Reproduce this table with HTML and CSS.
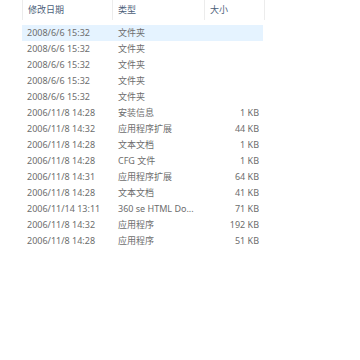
FILE: index.html
```html
<!DOCTYPE html>
<html>
<head>
<meta charset="utf-8">
<link rel="stylesheet" href="styles.css">
</head>
<body>
<div class="list">
  <div class="header">
    <div class="hcell">修改日期</div>
    <div class="hcell">类型</div>
    <div class="hcell">大小</div>
  </div>
  <div class="rows">
    <div class="row selected"><span class="date">2008/6/6 15:32</span><span class="type">文件夹</span><span class="size"></span></div>
    <div class="row"><span class="date">2008/6/6 15:32</span><span class="type">文件夹</span><span class="size"></span></div>
    <div class="row"><span class="date">2008/6/6 15:32</span><span class="type">文件夹</span><span class="size"></span></div>
    <div class="row"><span class="date">2008/6/6 15:32</span><span class="type">文件夹</span><span class="size"></span></div>
    <div class="row"><span class="date">2008/6/6 15:32</span><span class="type">文件夹</span><span class="size"></span></div>
    <div class="row"><span class="date">2006/11/8 14:28</span><span class="type">安装信息</span><span class="size">1 KB</span></div>
    <div class="row"><span class="date">2006/11/8 14:32</span><span class="type">应用程序扩展</span><span class="size">44 KB</span></div>
    <div class="row"><span class="date">2006/11/8 14:28</span><span class="type">文本文档</span><span class="size">1 KB</span></div>
    <div class="row"><span class="date">2006/11/8 14:28</span><span class="type">CFG 文件</span><span class="size">1 KB</span></div>
    <div class="row"><span class="date">2006/11/8 14:31</span><span class="type">应用程序扩展</span><span class="size">64 KB</span></div>
    <div class="row"><span class="date">2006/11/8 14:28</span><span class="type">文本文档</span><span class="size">41 KB</span></div>
    <div class="row"><span class="date">2006/11/14 13:11</span><span class="type">360 se HTML Do...</span><span class="size">71 KB</span></div>
    <div class="row"><span class="date">2006/11/8 14:32</span><span class="type">应用程序</span><span class="size">192 KB</span></div>
    <div class="row"><span class="date">2006/11/8 14:28</span><span class="type">应用程序</span><span class="size">51 KB</span></div>
  </div>
</div>
</body>
</html>
```
FILE: styles.css
```css
html, body {
  margin: 0;
  padding: 0;
  background: #ffffff;
}
body {
  font-family: "Noto Sans", "Noto Sans CJK SC", sans-serif;
  font-size: 9px;
  color: #6d6d6d;
}
.list {
  padding-left: 22px;
  width: 243px;
}
.header {
  display: grid;
  grid-template-columns: 90px 92px 61px;
  height: 20px;
  margin-bottom: 5px;
}
.hcell {
  border-left: 1px solid #ececec;
  padding-left: 5px;
  line-height: 20px;
  color: #4c607a;
}
.hcell:last-child {
  border-right: 1px solid #ececec;
}
.row {
  display: grid;
  grid-template-columns: 90px 92px 59px;
  height: 16px;
  line-height: 16px;
  white-space: nowrap;
}
.row.selected {
  background: #e5f3ff;
  width: 241px;
}
.date {
  padding-left: 5px;
}
.type {
  padding-left: 6px;
}
.size {
  text-align: right;
  padding-right: 4px;
}
```
